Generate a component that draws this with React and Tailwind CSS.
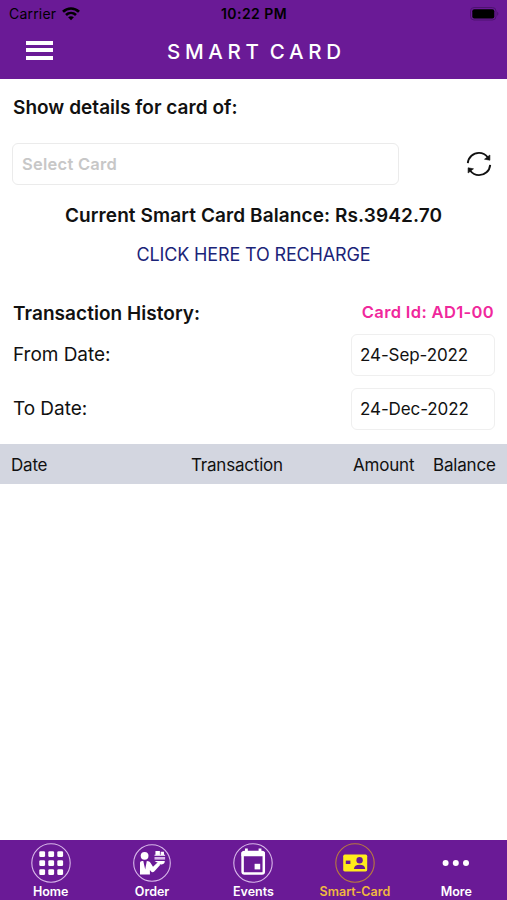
// ============================================================
// SmartCardScreen
// Card picker, balance, transaction history, bottom tab bar
// ============================================================
import { useState } from "react";

const COLUMNS = [
  { label: "Date",        className: "w-[180px]" },
  { label: "Transaction", className: "w-[162px]" },
  { label: "Amount",      className: "w-[80px]" },
  { label: "Balance",     className: "" },
];

const Wifi = () => (
  <svg width="18" height="14" viewBox="0 0 18 14" fill="none" stroke="#000" strokeWidth="2.7">
    <path d="M1 4.7C5.6.4 12.4.4 17 4.7" />
    <path d="M4 8c2.9-2.7 7.1-2.7 10 0" />
    <path d="M6.1 10.3c1.7-1.5 4.1-1.5 5.8 0L9 13.3z" fill="#000" stroke="none" />
  </svg>
);

const Battery = () => (
  <svg width="29" height="14" viewBox="0 0 29 14">
    <rect x="0.5" y="0.5" width="25.5" height="12.5" rx="3.6" fill="none" stroke="#4d1370" />
    <rect x="2.3" y="2.2" width="22" height="9.2" rx="2" fill="#000" />
    <path d="M27.2 4.7c1.6.7 1.6 3.4 0 4.1z" fill="#4d1370" />
  </svg>
);

const Refresh = () => (
  <svg width="26" height="26" viewBox="0 0 26 26" fill="none" stroke="#111" strokeWidth="1.9">
    <path d="M1.8 12.2C2.4 6 7.2 1.9 13 1.9c3.6 0 6.6 1.5 8.7 4.3" />
    <path d="M24.2 13.8C23.6 20 18.8 24.1 13 24.1c-3.6 0-6.6-1.5-8.7-4.3" />
    <path d="M23.9 4v5.2l-5.4-1z" fill="#111" stroke="#111" strokeWidth="0.6" />
    <path d="M2.1 22v-5.2l5.4 1z" fill="#111" stroke="#111" strokeWidth="0.6" />
  </svg>
);

const HomeIcon = () => (
  <svg width="40" height="40" viewBox="0 0 40 40">
    <circle cx="20" cy="20" r="19.2" fill="none" stroke="#d9b8ea" strokeWidth="1.1" />
    {[8.3, 17.3, 26.3].map(y =>
      [8.3, 17.3, 26.3].map(x => (
        <rect key={`${x}-${y}`} x={x} y={y} width="5.8" height="5.8" rx="1.3" fill="#fff" />
      ))
    )}
  </svg>
);

const OrderIcon = () => (
  <svg width="40" height="40" viewBox="0 0 40 40">
    <circle cx="20" cy="20" r="18.3" fill="none" stroke="#d9b8ea" strokeWidth="1.1" />
    <circle cx="12.6" cy="12.8" r="3.9" fill="#fff" />
    <path d="M8 31.6V20.2c0-1.5.8-2.3 2.3-2.3h1l1.9 8.5 1.6-8.5c2 0 3.1.8 4 2.4l2.2 3.5 4-3.8h2.9v2.3l-5.7 6.2c-1 1-2.4 1-3.3-.2l-1-1.4v4.7z" fill="#fff" />
    <path d="M22.5 18.1h10.3c-.1 2.3-1.2 3.3-3.1 3.3h-1.2z" fill="#fff" />
    <path d="M22.5 14h10.6v2.6H22.5z" fill="#d9b8ea" />
    <path d="M22.5 12.3h10.6M24 8.6h3.3v3.1H24zM29.2 9.4h2.2v2.4h-2.2z" fill="#fff" stroke="#fff" strokeWidth="1.1" />
  </svg>
);

const EventsIcon = () => (
  <svg width="40" height="40" viewBox="0 0 40 40">
    <circle cx="20" cy="20" r="19.2" fill="none" stroke="#d9b8ea" strokeWidth="1.1" />
    <rect x="9.6" y="9" width="21.2" height="21.6" rx="1.8" fill="none" stroke="#fff" strokeWidth="2.5" />
    <path d="M8.4 9.3h23.6v3.9H8.4zM12 5.4h2.8v4H12zM25.6 5.4h2.8v4h-2.8z" fill="#fff" />
    <rect x="21.6" y="20.8" width="5.6" height="5.6" fill="#fff" />
  </svg>
);

const CardIcon = () => (
  <svg width="40" height="40" viewBox="0 0 40 40">
    <circle cx="20" cy="20" r="19.2" fill="none" stroke="#b9793f" strokeWidth="1.1" />
    <rect x="8.2" y="11.6" width="24" height="16.8" rx="1.6" fill="#ffec1a" />
    <rect x="10.8" y="17.6" width="4.6" height="3.4" fill="#6a1a96" />
    <circle cx="24.6" cy="17.2" r="3.2" fill="#6a1a96" />
    <path d="M18.9 26c.3-2.9 2.2-4.2 5.7-4.2s5.3 1.3 5.6 4.2z" fill="#6a1a96" />
  </svg>
);

const MoreIcon = () => (
  <svg width="40" height="40" viewBox="0 0 40 40" fill="#fff">
    <circle cx="9.6" cy="20" r="3" />
    <circle cx="19.8" cy="20" r="3" />
    <circle cx="30" cy="20" r="3" />
  </svg>
);

const TABS = [
  { label: "Home",       icon: HomeIcon },
  { label: "Order",      icon: OrderIcon },
  { label: "Events",     icon: EventsIcon },
  { label: "Smart-Card", icon: CardIcon },
  { label: "More",       icon: MoreIcon },
];

const DateRow = ({ label, value }) => (
  <div className="flex items-center justify-between h-[42px] pl-[13px] pr-3">
    <p className="text-[19px] tracking-[-0.05px]">{label}</p>
    <div className="w-[144px] h-[42px] rounded-md border border-[#efefef] flex items-center pl-2 pt-[2px] text-[17px] tracking-[-0.1px]">
      {value}
    </div>
  </div>
);

export default function App() {
  const [tab, setTab] = useState("Smart-Card");

  return (
    <div className="w-full h-[900px] bg-white text-[#111] flex flex-col overflow-hidden whitespace-nowrap font-['Inter',sans-serif]">

      {/* ── Header ── */}
      <header className="h-[79px] bg-[#6a1a96] shrink-0">
        <div className="h-[27px] grid grid-cols-3 items-center pl-[9px] pr-[8px] text-black">
          <div className="flex items-center gap-[6px]">
            <span className="text-[14px] tracking-[0.2px]">Carrier</span>
            <Wifi />
          </div>
          <span className="text-center text-[14px] font-semibold tracking-[0.45px]">10:22 PM</span>
          <div className="flex justify-end"><Battery /></div>
        </div>
        <div className="h-[50px] flex items-center">
          <button className="ml-[26px] mb-1 w-[27px] flex flex-col gap-[3.5px]">
            <span className="h-1 bg-white" />
            <span className="h-1 bg-white" />
            <span className="h-1 bg-white" />
          </button>
          <h1 className="ml-[114px] text-[20.5px] font-medium tracking-[4.7px] [word-spacing:-4px] text-white">SMART CARD</h1>
        </div>
      </header>

      {/* ── Card picker ── */}
      <main className="flex-1">
        <h2 className="mt-[14px] ml-[13px] h-7 leading-[29px] text-[19px] font-semibold tracking-[0.03px]">Show details for card of:</h2>
        <div className="mt-[22px] flex items-center justify-between pl-3 pr-[15px]">
          <div className="w-[387px] h-[42px] rounded-md border border-[#ebebeb] flex items-center pl-[9px] text-[16.5px] font-semibold tracking-[0.25px] text-[#c7c7c7]">
            Select Card
          </div>
          <Refresh />
        </div>
        <p className="mt-4 h-7 leading-[29px] text-center text-[19px] font-semibold tracking-[0.1px]">
          Current Smart Card Balance: Rs.3942.70
        </p>
        <p className="mt-[11px] h-7 leading-[29px] text-center text-[18px] tracking-[-0.15px] text-[#1b2478]">CLICK HERE TO RECHARGE</p>

        {/* ── Transaction history ── */}
        <div className="mt-[31px] h-7 flex items-center justify-between pl-[13px] pr-[13px]">
          <h2 className="text-[19px] leading-[29px] font-semibold tracking-[0.05px]">Transaction History:</h2>
          <span className="text-[16.5px] leading-6 mb-[2px] font-semibold tracking-[0.35px] text-[#f0289c]">Card Id: AD1-00</span>
        </div>
        <div className="mt-[7px] flex flex-col gap-3">
          <DateRow label="From Date:" value="24-Sep-2022" />
          <DateRow label="To Date:" value="24-Dec-2022" />
        </div>
        <div className="mt-[14px] h-10 bg-[#d3d6e0] flex items-center pl-[11px] pt-[3px] text-[17px] tracking-[-0.2px]">
          {COLUMNS.map(c => <span key={c.label} className={c.className}>{c.label}</span>)}
        </div>
      </main>

      {/* ── Tab bar ── */}
      <nav className="h-[60px] shrink-0 bg-[#6a1a96] grid grid-cols-5">
        {TABS.map(({ label, icon: Icon }) => (
          <button
            key={label}
            onClick={() => setTab(label)}
            className={`flex flex-col items-center pt-[3px] text-[12.5px] font-semibold ${label === tab ? "text-[#f0b840]" : "text-white"}`}
          >
            <Icon />
            <span className="leading-[17px]">{label}</span>
          </button>
        ))}
      </nav>

    </div>
  );
}
